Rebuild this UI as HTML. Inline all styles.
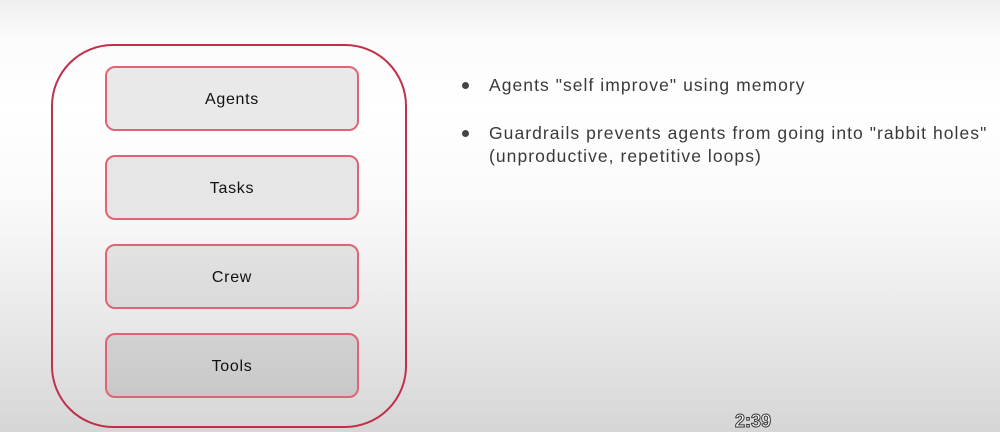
<!DOCTYPE html>
<html><head><meta charset="utf-8"><style>
html,body{margin:0;padding:0;}
body{width:1000px;height:432px;position:relative;overflow:hidden;font-family:"Liberation Sans",sans-serif;
background:linear-gradient(to bottom,#efefef 0px,#fbfbfb 40px,#ffffff 110px,#fafafa 200px,#ececec 300px,#d6d6d6 432px);}
.outer{position:absolute;left:51px;top:44px;width:352px;height:380px;border:2px solid #c0304a;border-radius:62px;}
.box{position:absolute;left:105px;width:250px;height:61px;border:2.5px solid #e06474;border-radius:10px;
display:flex;align-items:center;justify-content:center;font-size:16px;color:#111;letter-spacing:0.7px;padding-top:3px;box-sizing:content-box;height:58px;}
.txt{position:absolute;left:489px;font-size:17.5px;color:#3a3a3a;line-height:23px;letter-spacing:1.05px;white-space:nowrap;}
.dot{position:absolute;left:462px;width:7px;height:7px;border-radius:50%;background:#444;}
.time{position:absolute;left:735px;top:411px;font-size:18px;font-weight:bold;color:#fff;-webkit-text-stroke:1px #333;}
</style></head><body>
<div class="outer"></div>
<div class="box" style="top:66px;background:#e9e9e9">Agents</div>
<div class="box" style="top:155px;background:#e6e6e6">Tasks</div>
<div class="box" style="top:244px;background:linear-gradient(#e2e2e2,#dadada)">Crew</div>
<div class="box" style="top:333px;background:linear-gradient(#d2d2d2,#c8c8c8)">Tools</div>
<div class="dot" style="top:82px"></div>
<div class="txt" style="top:74px">Agents "self improve" using memory</div>
<div class="dot" style="top:130px"></div>
<div class="txt" style="top:122px">Guardrails prevents agents from going into "rabbit holes"<br>(unproductive, repetitive loops)</div>
<div class="time">2:39</div>
</body></html>
